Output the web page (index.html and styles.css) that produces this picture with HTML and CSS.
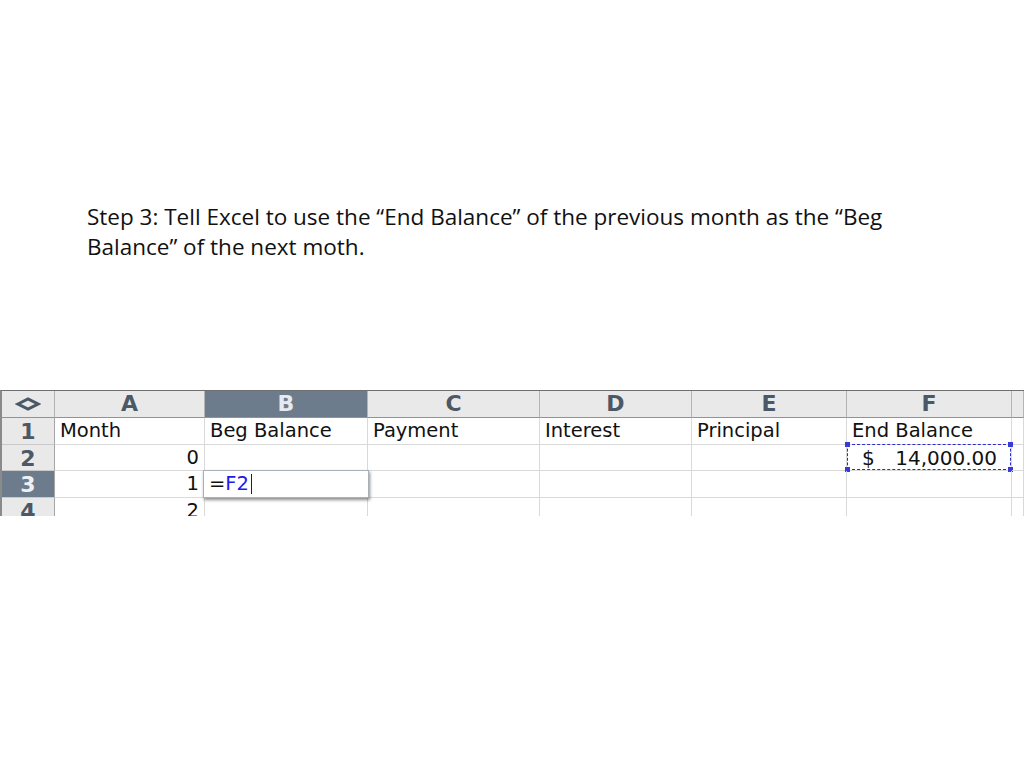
FILE: index.html
```html
<!DOCTYPE html>
<html lang="en">
<head>
<meta charset="utf-8">
<title>Step 3</title>
<link rel="stylesheet" href="styles.css">
</head>
<body>
<main class="slide">
  <p class="caption">Step 3: Tell Excel to use the “End Balance” of the previous month as the “Beg Balance” of the next moth.</p>
  <div class="sheet">
    <div class="hd corner"><svg width="26" height="14" viewBox="0 0 26 14"><path d="M3 7 L13 2 L23 7 L13 12 Z" fill="none" stroke="#4b5866" stroke-width="3" stroke-linejoin="miter"/></svg></div>
    <div class="hd col">A</div>
    <div class="hd col sel">B</div>
    <div class="hd col">C</div>
    <div class="hd col">D</div>
    <div class="hd col">E</div>
    <div class="hd col">F</div>
    <div class="hd col"></div>

    <div class="rh">1</div>
    <div class="c">Month</div>
    <div class="c">Beg Balance</div>
    <div class="c">Payment</div>
    <div class="c">Interest</div>
    <div class="c">Principal</div>
    <div class="c">End Balance</div>
    <div class="c"></div>

    <div class="rh">2</div>
    <div class="c num">0</div>
    <div class="c"></div>
    <div class="c"></div>
    <div class="c"></div>
    <div class="c"></div>
    <div class="c money"><span>$</span><span>14,000.00</span>
      <div class="ants"><i class="h tl"></i><i class="h tr"></i><i class="h bl"></i><i class="h br"></i></div>
    </div>
    <div class="c"></div>

    <div class="rh sel">3</div>
    <div class="c num">1</div>
    <div class="c editing"><div class="editor">=<span class="ref">F2</span><span class="caret"></span></div></div>
    <div class="c"></div>
    <div class="c"></div>
    <div class="c"></div>
    <div class="c"></div>
    <div class="c"></div>

    <div class="rh">4</div>
    <div class="c num">2</div>
    <div class="c"></div>
    <div class="c"></div>
    <div class="c"></div>
    <div class="c"></div>
    <div class="c"></div>
    <div class="c"></div>
  </div>
</main>
</body>
</html>
```
FILE: styles.css
```css
html, body {
  margin: 0;
  padding: 0;
  background: #ffffff;
}
.slide {
  width: 1024px;
  height: 768px;
  overflow: hidden;
  padding-top: 202px;
  box-sizing: border-box;
}
.caption {
  margin: 0 0 0 87px;
  width: 815px;
  font-family: "Open Sans", "Liberation Sans", sans-serif;
  font-size: 22.5px;
  line-height: 30px;
  color: #111;
}
.sheet {
  margin-top: 128px;
  display: grid;
  grid-template-columns: 53px 150px 163px 172px 152px 155px 165px 12px;
  grid-template-rows: 27px 26.5px 26.5px 26.5px 26.5px;
  height: 126px;
  overflow: hidden;
  border-top: 1px solid #6f6f6f;
  border-left: 2px solid #8a8a8a;
  width: 1024px;
  box-sizing: border-box;
  font-family: "DejaVu Sans", "Liberation Sans", sans-serif;
}
.sheet > div {
  box-sizing: border-box;
  position: relative;
}
.hd {
  background: #e9e9e9;
  border-right: 1px solid #b4b4b4;
  border-bottom: 1px solid #8d9399;
  color: #4b5866;
  font-weight: bold;
  font-size: 22px;
  text-align: center;
  line-height: 26px;
}
.hd.corner {
  display: flex;
  align-items: center;
  justify-content: center;
}
.hd.sel {
  background: #6c7c8d;
  color: #e6eaee;
}
.rh {
  background: #e9e9e9;
  border-right: 1px solid #a5a5a5;
  border-bottom: 1px solid #c9c9c9;
  color: #4b5866;
  font-weight: bold;
  font-size: 22px;
  text-align: center;
  line-height: 27px;
}
.rh.sel {
  background: #6c7c8d;
  color: #eef1f4;
}
.c {
  border-right: 1px solid #d9d9d9;
  border-bottom: 1px solid #d9d9d9;
  font-size: 19.5px;
  line-height: 26px;
  color: #111;
  padding: 0 5px;
  white-space: nowrap;
}
.c.num {
  text-align: right;
}
.c.money {
  display: flex;
  justify-content: space-between;
  padding: 0 14px 0 15px;
  font-size: 20px;
}
.ants {
  position: absolute;
  left: 0;
  top: -1px;
  right: 0;
  bottom: 0;
  border: 1px dashed #2b2bd0;
}
.h {
  position: absolute;
  width: 5px;
  height: 5px;
  background: #3a3ad8;
}
.h.tl { left: -3px; top: -3px; }
.h.tr { right: -3px; top: -3px; }
.h.bl { left: -3px; bottom: -3px; }
.h.br { right: -3px; bottom: -3px; }
.editing {
  overflow: visible;
  z-index: 2;
}
.editor {
  position: absolute;
  left: -2px;
  top: -1px;
  width: 166px;
  height: 28px;
  box-sizing: border-box;
  background: #fff;
  border: 1px solid #a9b0b8;
  box-shadow: 1px 2px 3px rgba(0, 0, 0, 0.45);
  padding: 0 5px;
  font-size: 19.5px;
  line-height: 26px;
  color: #111;
  display: flex;
  align-items: center;
}
.ref {
  color: #1a1aee;
}
.caret {
  display: inline-block;
  width: 1px;
  height: 20px;
  background: #222;
  margin-left: 2px;
}
```
